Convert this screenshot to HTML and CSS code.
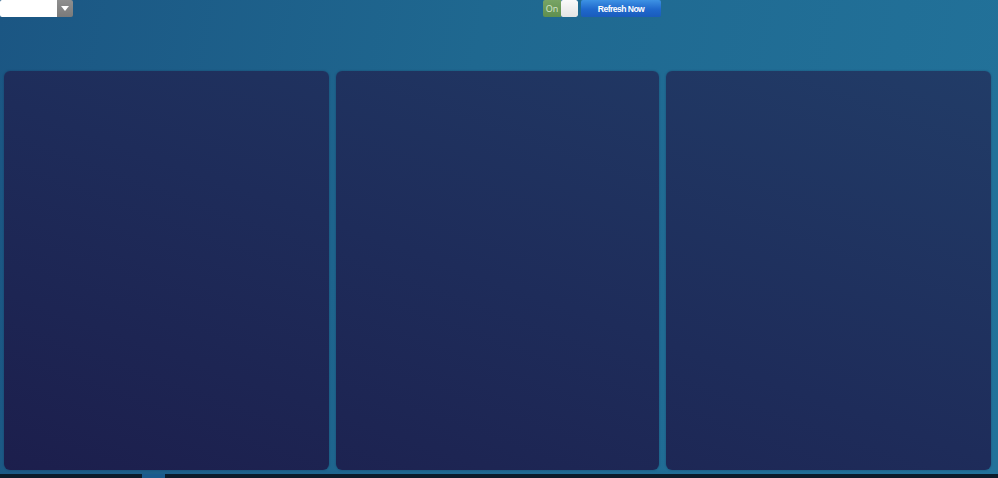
FILE: index.html
```html
<!DOCTYPE html>
<html>
<head>
<meta charset="utf-8">
<link rel="stylesheet" href="styles.css">
</head>
<body>
<div class="app">
  <div class="toolbar">
    <div class="combo">
      <div class="combo-field"></div>
      <div class="combo-btn"><svg width="8" height="5" viewBox="0 0 8 5"><path d="M0 0H8L4 5Z" fill="#fff"/></svg></div>
    </div>
    <div class="controls">
      <div class="toggle"><span class="toggle-label">On</span><span class="toggle-knob"></span></div>
      <button class="refresh">Refresh Now</button>
    </div>
  </div>
  <div class="panels">
    <div class="panel p1"></div>
    <div class="panel p2"></div>
    <div class="panel p3"></div>
  </div>
  <div class="statusbar"><span class="status-mark"></span></div>
</div>
</body>
</html>
```
FILE: styles.css
```css
html, body { margin: 0; padding: 0; height: 100%; }
body {
  font-family: "Open Sans", "Liberation Sans", sans-serif;
  background: linear-gradient(100deg, #1b5683 0%, #1f6890 45%, #22729a 100%);
  overflow: hidden;
}
.app { display: flex; flex-direction: column; height: 478px; }
.toolbar { display: flex; height: 18px; align-items: flex-start; }
.combo { display: flex; width: 73px; height: 17px; border-radius: 2px; overflow: hidden; }
.combo-field { width: 57px; background: #fff; }
.combo-btn {
  width: 16px; background: linear-gradient(#8f8f8f, #7a7a7a);
  display: flex; align-items: center; justify-content: center;
}
.controls { display: flex; margin-left: 470px; gap: 3px; }
.toggle { display: flex; width: 35px; height: 17px; border-radius: 2px; overflow: hidden; }
.toggle-label {
  width: 18px; background: linear-gradient(#78a464, #5f8f4f);
  color: #d9e8cf; font-size: 9px; line-height: 17px; text-align: center;
}
.toggle-knob { width: 17px; background: linear-gradient(#fafafa, #e4e4e4); border-radius: 2px; }
.refresh {
  width: 80px; height: 17px; padding: 0; border: 0; border-radius: 2px;
  background: linear-gradient(#3d92e4, #1f68cc 55%, #1a5cbc);
  color: #fff; font-family: "Liberation Sans", Arial, sans-serif;
  font-size: 8.6px; font-weight: 700; letter-spacing: -0.55px;
}
.panels { display: flex; gap: 7px; padding: 53px 7px 0 4px; height: 399px; }
.panel {
  border-radius: 6px;
  background: linear-gradient(200deg, #223f6a 0%, #1e2c5a 55%, #1c1e4c 100%);
  background-attachment: fixed;
  box-shadow: 0 0 2px rgba(10, 30, 60, 0.4);
}
.p1 { width: 325px; }
.p2 { width: 323px; }
.p3 { width: 325px; }
.statusbar { margin-top: auto; height: 4px; background: #0b1c2b; display: flex; }
.status-mark { width: 23px; margin-left: 142px; background: #1a5a8c; }
```
